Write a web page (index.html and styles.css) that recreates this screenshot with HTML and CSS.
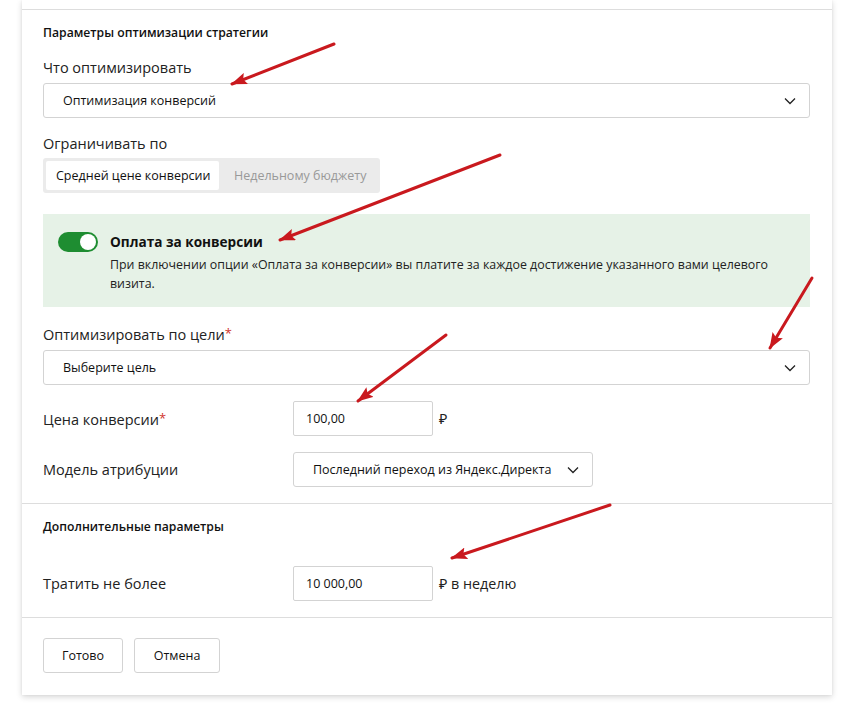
FILE: index.html
```html
<!DOCTYPE html>
<html lang="ru">
<head>
<meta charset="utf-8">
<link rel="stylesheet" href="styles.css">
</head>
<body>
<div class="page">
  <div class="card">
    <div class="card-top"></div>
    <section class="section">
      <h3 class="sec-title">Параметры оптимизации стратегии</h3>
      <div class="label">Что оптимизировать</div>
      <div class="select full">
        <span>Оптимизация конверсий</span>
        <svg class="chev" width="12" height="8" viewBox="0 0 12 8"><path d="M1 1.5 L6 6.5 L11 1.5" fill="none" stroke="#222" stroke-width="1.3"/></svg>
      </div>
      <div class="label gap">Ограничивать по</div>
      <div class="segment">
        <div class="seg-opt active">Средней цене конверсии</div>
        <div class="seg-opt">Недельному бюджету</div>
      </div>
      <div class="notice">
        <div class="toggle"><div class="knob"></div></div>
        <div class="notice-text">
          <div class="notice-title">Оплата за конверсии</div>
          <div class="notice-desc">При включении опции «Оплата за конверсии» вы платите за каждое достижение указанного вами целевого визита.</div>
        </div>
      </div>
      <div class="label gap">Оптимизировать по цели<span class="req">*</span></div>
      <div class="select full">
        <span>Выберите цель</span>
        <svg class="chev" width="12" height="8" viewBox="0 0 12 8"><path d="M1 1.5 L6 6.5 L11 1.5" fill="none" stroke="#222" stroke-width="1.3"/></svg>
      </div>
      <div class="row">
        <div class="row-label">Цена конверсии<span class="req">*</span></div>
        <div class="input">100,00</div>
        <div class="unit">₽</div>
      </div>
      <div class="row">
        <div class="row-label">Модель атрибуции</div>
        <div class="select attr">
          <span>Последний переход из Яндекс.Директа</span>
          <svg class="chev" width="12" height="8" viewBox="0 0 12 8"><path d="M1 1.5 L6 6.5 L11 1.5" fill="none" stroke="#222" stroke-width="1.3"/></svg>
        </div>
      </div>
    </section>
    <section class="section">
      <h3 class="sec-title">Дополнительные параметры</h3>
      <div class="row row-spend">
        <div class="row-label">Тратить не более</div>
        <div class="input">10 000,00</div>
        <div class="unit">₽ в неделю</div>
      </div>
    </section>
    <section class="section actions">
      <button class="btn btn-ok">Готово</button>
      <button class="btn btn-cancel">Отмена</button>
    </section>
  </div>
  <svg class="arrows" width="854" height="707" viewBox="0 0 854 707">
    <defs>
      <marker id="ah" markerUnits="userSpaceOnUse" markerWidth="16" markerHeight="12" refX="15" refY="6" orient="auto">
        <path d="M0,0 L16,6 L0,12 L3,6 z" fill="#c9191e"/>
      </marker>
    </defs>
    <g stroke="#c9191e" stroke-width="3" stroke-linecap="round" fill="none">
      <line x1="334" y1="44" x2="232" y2="84" marker-end="url(#ah)"/>
      <line x1="500" y1="155" x2="280" y2="240" marker-end="url(#ah)"/>
      <line x1="812" y1="278" x2="770" y2="348" marker-end="url(#ah)"/>
      <line x1="446" y1="335" x2="358" y2="401" marker-end="url(#ah)"/>
      <line x1="610" y1="505" x2="452" y2="558" marker-end="url(#ah)"/>
    </g>
  </svg>
</div>
</body>
</html>
```
FILE: styles.css
```css
* { box-sizing: border-box; }
html, body { margin: 0; padding: 0; background: #fff; }
body {
  font-family: "Open Sans", "Noto Sans", Arial, sans-serif;
  color: #000;
  width: 854px;
  height: 707px;
  overflow: hidden;
}
.page { position: relative; width: 854px; height: 707px; }
.card {
  margin-left: 22px;
  width: 810px;
  background: #fff;
  box-shadow: 0 2px 6px rgba(0,0,0,0.16), 0 0 2px rgba(0,0,0,0.06);
}
.card-top { height: 9px; }
.section {
  border-top: 1px solid #ddd;
  padding: 14px 22px 16px 21px;
}
.sec-title {
  margin: 0;
  font-size: 12.2px;
  font-weight: 600;
  line-height: 18px;
  color: #111;
}
.label {
  margin-top: 16px;
  font-size: 14.5px;
  line-height: 20px;
  color: #222;
}
.label.gap { margin-top: 16px; }
.req { color: #d0342c; font-size: 13px; vertical-align: 2px; }
.select {
  display: flex;
  align-items: center;
  justify-content: space-between;
  height: 35px;
  border: 1px solid #d3d3d3;
  border-radius: 3px;
  font-size: 12.5px;
  color: #111;
  background: #fff;
  white-space: nowrap;
}
.select.full { margin-top: 5px; padding: 0 13px 0 19px; }
.chev { flex: none; }
.segment {
  margin-top: 4px;
  display: flex;
  background: #ebebeb;
  border-radius: 3px;
  padding: 3px;
  height: 35px;
  width: 337px;
}
.seg-opt {
  flex: none;
  display: flex;
  align-items: center;
  white-space: nowrap;
  font-size: 12.5px;
  color: #999;
  padding: 0 0 0 15px;
}
.seg-opt.active {
  background: #fff;
  color: #111;
  width: 173px;
  padding-left: 10px;
  border-radius: 2px;
}
.notice {
  margin-top: 21px;
  background: #e6f2e7;
  display: flex;
  padding: 18px 20px 12px 15px;
  min-height: 93px;
}
.toggle {
  flex: none;
  width: 40px;
  height: 20px;
  border-radius: 10px;
  background: #1e8d31;
  position: relative;
  margin-top: 0;
}
.knob {
  position: absolute;
  right: 2px;
  top: 2px;
  width: 16px;
  height: 16px;
  border-radius: 50%;
  background: #fff;
}
.notice-text { margin-left: 12px; }
.notice-title {
  font-size: 13.6px;
  font-weight: 700;
  line-height: 20px;
  color: #111;
}
.notice-desc {
  margin-top: 3px;
  font-size: 12.4px;
  line-height: 19px;
  color: #222;
}
.row {
  display: flex;
  align-items: center;
  margin-top: 16px;
}
.row-label {
  width: 250px;
  flex: none;
  font-size: 14.5px;
  color: #222;
}
.input {
  width: 140px;
  height: 35px;
  border: 1px solid #d3d3d3;
  border-radius: 2px;
  display: flex;
  align-items: center;
  padding-left: 12px;
  font-size: 12.5px;
  color: #111;
}
.unit {
  margin-left: 6px;
  font-size: 14.3px;
  color: #222;
}
.select.attr {
  width: 300px;
  padding: 0 13px 0 19px;
}
.row-spend { margin-top: 30px; }
.actions {
  padding: 20px 22px 22px 21px;
  display: flex;
  gap: 11px;
}
.btn {
  font-family: inherit;
  font-size: 12.5px;
  color: #111;
  background: #fff;
  border: 1px solid #d3d3d3;
  border-radius: 3px;
  height: 35px;
  padding: 0;
}
.btn-ok { width: 80px; }
.btn-cancel { width: 86px; }
.arrows {
  position: absolute;
  left: 0;
  top: 0;
  pointer-events: none;
}
```
